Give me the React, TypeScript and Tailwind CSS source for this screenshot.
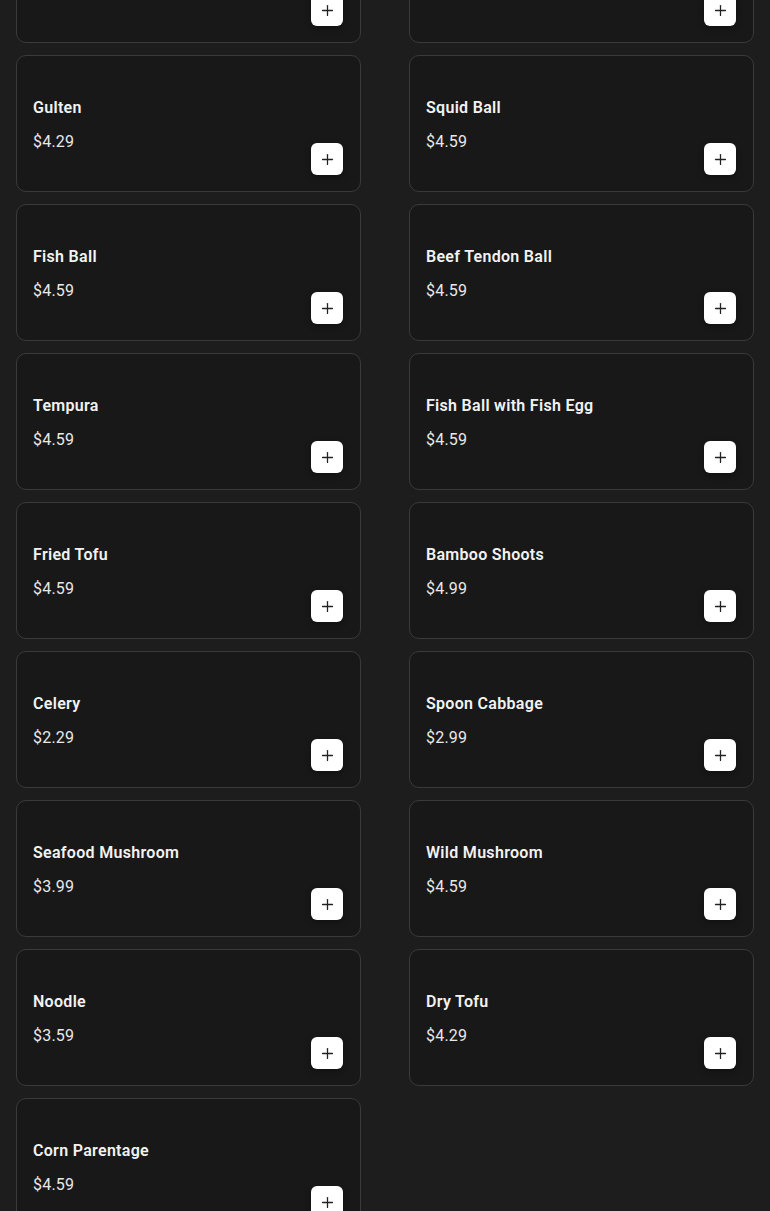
import React from "react";
import { Plus } from "lucide-react";

const items: [string, string][] = [
  ["Fish Tofu", "$4.59"],
  ["Crab Stick", "$4.59"],
  ["Gulten", "$4.29"],
  ["Squid Ball", "$4.59"],
  ["Fish Ball", "$4.59"],
  ["Beef Tendon Ball", "$4.59"],
  ["Tempura", "$4.59"],
  ["Fish Ball with Fish Egg", "$4.59"],
  ["Fried Tofu", "$4.59"],
  ["Bamboo Shoots", "$4.99"],
  ["Celery", "$2.29"],
  ["Spoon Cabbage", "$2.99"],
  ["Seafood Mushroom", "$3.99"],
  ["Wild Mushroom", "$4.59"],
  ["Noodle", "$3.59"],
  ["Dry Tofu", "$4.29"],
  ["Corn Parentage", "$4.59"],
];

function Card({ name, price }: { name: string; price: string }) {
  return (
    <div className="flex h-[137px] justify-between rounded-[10px] border border-[#3a3a3a] bg-[#181818] p-4">
      <div className="flex flex-col self-start pt-[24px]">
        <div className="text-[16px] font-semibold leading-6 tracking-[0.3px] text-[#f2f2f2]">{name}</div>
        <div className="mt-[10px] text-[16px] leading-6 tracking-[0.2px] text-[#e8e8e8]">{price}</div>
      </div>
      <button className="mr-px flex h-8 w-8 items-center justify-center self-end rounded-[6px] bg-white text-[#222] shadow-[0_2px_6px_rgba(0,0,0,0.35)]">
        <Plus size={17} strokeWidth={1.8} />
      </button>
    </div>
  );
}

export default function App() {
  return (
    <div
      className="min-h-[1211px] overflow-hidden bg-[#1d1d1d] px-4"
      style={{ fontFamily: "Roboto, 'Noto Sans', sans-serif" }}
    >
      <div className="-mt-[94px] grid grid-cols-2 gap-x-12 gap-y-3">
        {items.map(([n, p]) => (
          <Card key={n} name={n} price={p} />
        ))}
      </div>
    </div>
  );
}
